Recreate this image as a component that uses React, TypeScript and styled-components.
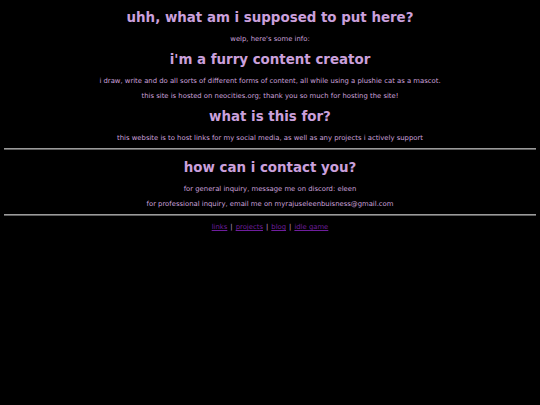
import styled, { createGlobalStyle } from "styled-components";

const GlobalStyle = createGlobalStyle`
	html, body {
		margin: 0;
		background: #000;
	}
	body {
		font-family: "DejaVu Sans", Verdana, sans-serif;
		color: #cba0dc;
	}
`;

const Page = styled.main`
	min-height: 405px;
	padding: 2px 4px 0;
	text-align: center;
	box-sizing: border-box;
`;

const Heading = styled.h2`
	font-size: 13.4px;
	line-height: 20px;
	font-weight: bold;
	margin: 6px 0;
	color: #cba0dc;
`;

const Text = styled.p`
	font-size: 6.85px;
	line-height: 10px;
	margin: 5px 0;
`;

const Rule = styled.hr<{ $last?: boolean }>`
	height: 0;
	margin: 5px 0 ${(p) => (p.$last ? "0" : "8px")};
	border: 0;
	border-top: 1px solid #9a9a9a;
	border-bottom: 1px solid #5e5e5e;
`;

const Nav = styled.nav`
	font-size: 6.85px;
	line-height: 10px;
	margin-top: 6px;
`;

const NavLink = styled.a`
	color: #6f1e9e;
	text-decoration: underline;
`;

const Sep = styled.span`
	margin: 0 3px;
`;

const links = ["links", "projects", "blog", "idle game"];

export default function App() {
	return (
		<>
			<GlobalStyle />
			<Page>
				<Heading>uhh, what am i supposed to put here?</Heading>
				<Text>welp, here's some info:</Text>
				<Heading>i'm a furry content creator</Heading>
				<Text>i draw, write and do all sorts of different forms of content, all while using a plushie cat as a mascot.</Text>
				<Text>this site is hosted on neocities.org; thank you so much for hosting the site!</Text>
				<Heading>what is this for?</Heading>
				<Text>this website is to host links for my social media, as well as any projects i actively support</Text>
				<Rule />
				<Heading>how can i contact you?</Heading>
				<Text>for general inquiry, message me on discord: eleen</Text>
				<Text>for professional inquiry, email me on myrajuseleenbuisness@gmail.com</Text>
				<Rule $last />
				<Nav>
					{links.map((l, i) => (
						<span key={l}>
							{i > 0 && <Sep>|</Sep>}
							<NavLink href="#">{l}</NavLink>
						</span>
					))}
				</Nav>
			</Page>
		</>
	);
}
